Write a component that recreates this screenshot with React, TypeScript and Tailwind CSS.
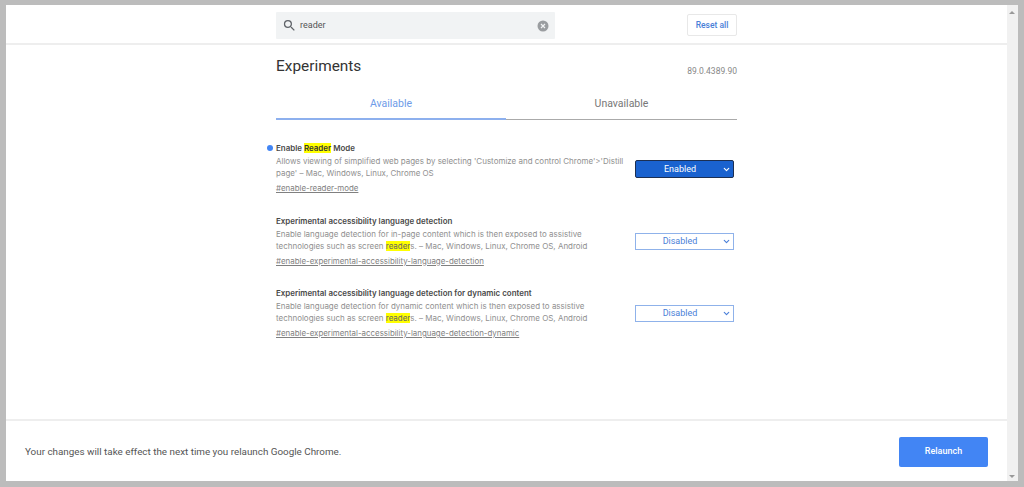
import React from 'react';
import { ChevronDown } from 'lucide-react';

const rows = [
  {
    title: <>Enable <mark className="bg-[#ffff00] text-[#333]">Reader</mark> Mode</>,
    desc: <>Allows viewing of simplified web pages by selecting 'Customize and control Chrome'&gt;'Distill page' – Mac, Windows, Linux, Chrome OS</>,
    link: '#enable-reader-mode',
    enabled: true,
  },
  {
    title: <>Experimental accessibility language detection</>,
    desc: <>Enable language detection for in-page content which is then exposed to assistive technologies such as screen <mark className="bg-[#ffff00] text-[#666]">reader</mark>s. – Mac, Windows, Linux, Chrome OS, Android</>,
    link: '#enable-experimental-accessibility-language-detection',
    enabled: false,
  },
  {
    title: <>Experimental accessibility language detection for dynamic content</>,
    desc: <>Enable language detection for dynamic content which is then exposed to assistive technologies such as screen <mark className="bg-[#ffff00] text-[#666]">reader</mark>s. – Mac, Windows, Linux, Chrome OS, Android</>,
    link: '#enable-experimental-accessibility-language-detection-dynamic',
    enabled: false,
  },
];

const Experiment = ({ row }: { row: (typeof rows)[number] }) => (
  <div className="relative flex h-[72.5px] items-start justify-between font-['Inter',sans-serif]">
    {row.enabled && <span className="absolute left-[-9px] top-[3px] h-[6px] w-[6px] rounded-full bg-[#4285f4]" />}
    <div className="w-[352px]">
      <div className="h-[13px] text-[7.95px] leading-[13px] font-semibold text-[#484848]">{row.title}</div>
      <p className="text-[7.98px] leading-[12px] text-[#909090]">{row.desc}</p>
      <a className="mt-[3px] block text-[7.9px] leading-[12px] text-[#808080] underline">{row.link}</a>
    </div>
    <div
      className={
        row.enabled
          ? 'mr-[3px] mt-[18px] flex h-[18px] w-[99px] items-center rounded-[2px] border border-[#1c2f52] bg-[#1a62cf] text-white'
          : 'mr-[3px] mt-[18px] flex h-[17px] w-[99px] items-center border border-[#8fb2ea] bg-white text-[#4a7fd8]'
      }
    >
      <span className="flex-1 pl-[2px] pt-[1px] text-center text-[9px] font-['Roboto',sans-serif]">{row.enabled ? 'Enabled' : 'Disabled'}</span>
      <ChevronDown size={9} strokeWidth={3} className="mr-[2px]" />
    </div>
  </div>
);

export default function App() {
  return (
    <div className="flex h-[487px] w-[1024px] overflow-hidden border-x-[6px] border-t-[5px] border-b-[6px] border-[#bcbcbc] bg-white font-['Roboto',sans-serif]">
      <div className="flex min-w-0 flex-1 flex-col">
        <header className="flex h-[40px] shrink-0 justify-center border-b-2 border-[#eeeeee]">
          <div className="flex w-[461px] items-start justify-between pt-[7px]">
            <div className="flex h-[27px] w-[279px] items-center rounded-[1px] bg-[#f1f3f4] pl-[6px] pr-[6px]">
              <svg width="15" height="15" viewBox="0 0 24 24" fill="#5f6368">
                <path d="M15.5 14h-.79l-.28-.27A6.47 6.47 0 0 0 16 9.5 6.5 6.5 0 1 0 9.5 16c1.61 0 3.09-.59 4.23-1.57l.27.28v.79l5 4.99L20.49 19l-4.99-5zm-6 0C7.01 14 5 11.99 5 9.5S7.01 5 9.5 5 14 7.01 14 9.5 11.99 14 9.5 14z" />
              </svg>
              <span className="ml-[3px] flex-1 text-[9px] text-[#555]">reader</span>
              <svg width="12" height="12" viewBox="0 0 12 12">
                <circle cx="6" cy="6" r="5.5" fill="#9a9da0" />
                <path d="M4 4l4 4M8 4l-4 4" stroke="#f1f3f4" strokeWidth="1.2" />
              </svg>
            </div>
            <button className="mt-[2px] h-[22px] w-[50px] rounded-[2px] border border-[#e8e8e8] bg-white text-[8.5px] font-medium text-[#4a7fd8]">
              Reset all
            </button>
          </div>
        </header>

        <main className="min-h-0 flex-1">
          <div className="mx-auto w-[461px]">
            <div className="flex items-start justify-between pt-[9px]">
              <h1 className="text-[15.4px] leading-[24px] text-[#333]">Experiments</h1>
              <span className="mt-[10px] text-[8.5px] leading-[14px] text-[#888]">89.0.4389.90</span>
            </div>
            <div className="mt-[13px] flex h-[29px] border-b border-[#aaaaaa]">
              <div className="relative h-[28px] w-[230px] pt-[6px] text-center text-[10.5px] leading-[14px] text-[#6e9be8]">
                Available
                <span className="absolute bottom-[-1px] left-0 h-[2px] w-full bg-[#8db0ee]" />
              </div>
              <div className="flex-1 pt-[6px] text-center text-[10.5px] leading-[14px] text-[#777]">Unavailable</div>
            </div>
            <div className="mt-[22px]">
              {rows.map((row) => (
                <Experiment key={row.link} row={row} />
              ))}
            </div>
          </div>
        </main>

        <footer className="flex h-[62px] shrink-0 items-center justify-between border-t-2 border-[#eeeeee] pl-[19px] pr-[19px] pt-[2px]">
          <span className="text-[9.85px] text-[#555]">Your changes will take effect the next time you relaunch Google Chrome.</span>
          <button className="h-[30px] w-[89px] rounded-[2px] bg-[#4285f4] text-[9px] font-medium text-white">Relaunch</button>
        </footer>
      </div>

      <div className="relative w-[11px] shrink-0 bg-[#f1f1f1]">
        <span className="absolute left-[2px] top-[6px] h-0 w-0 border-x-[3px] border-b-[3px] border-x-transparent border-b-[#999]" />
        <span className="absolute bottom-[3px] left-[2px] h-0 w-0 border-x-[3px] border-t-[3px] border-x-transparent border-t-[#999]" />
      </div>
    </div>
  );
}
